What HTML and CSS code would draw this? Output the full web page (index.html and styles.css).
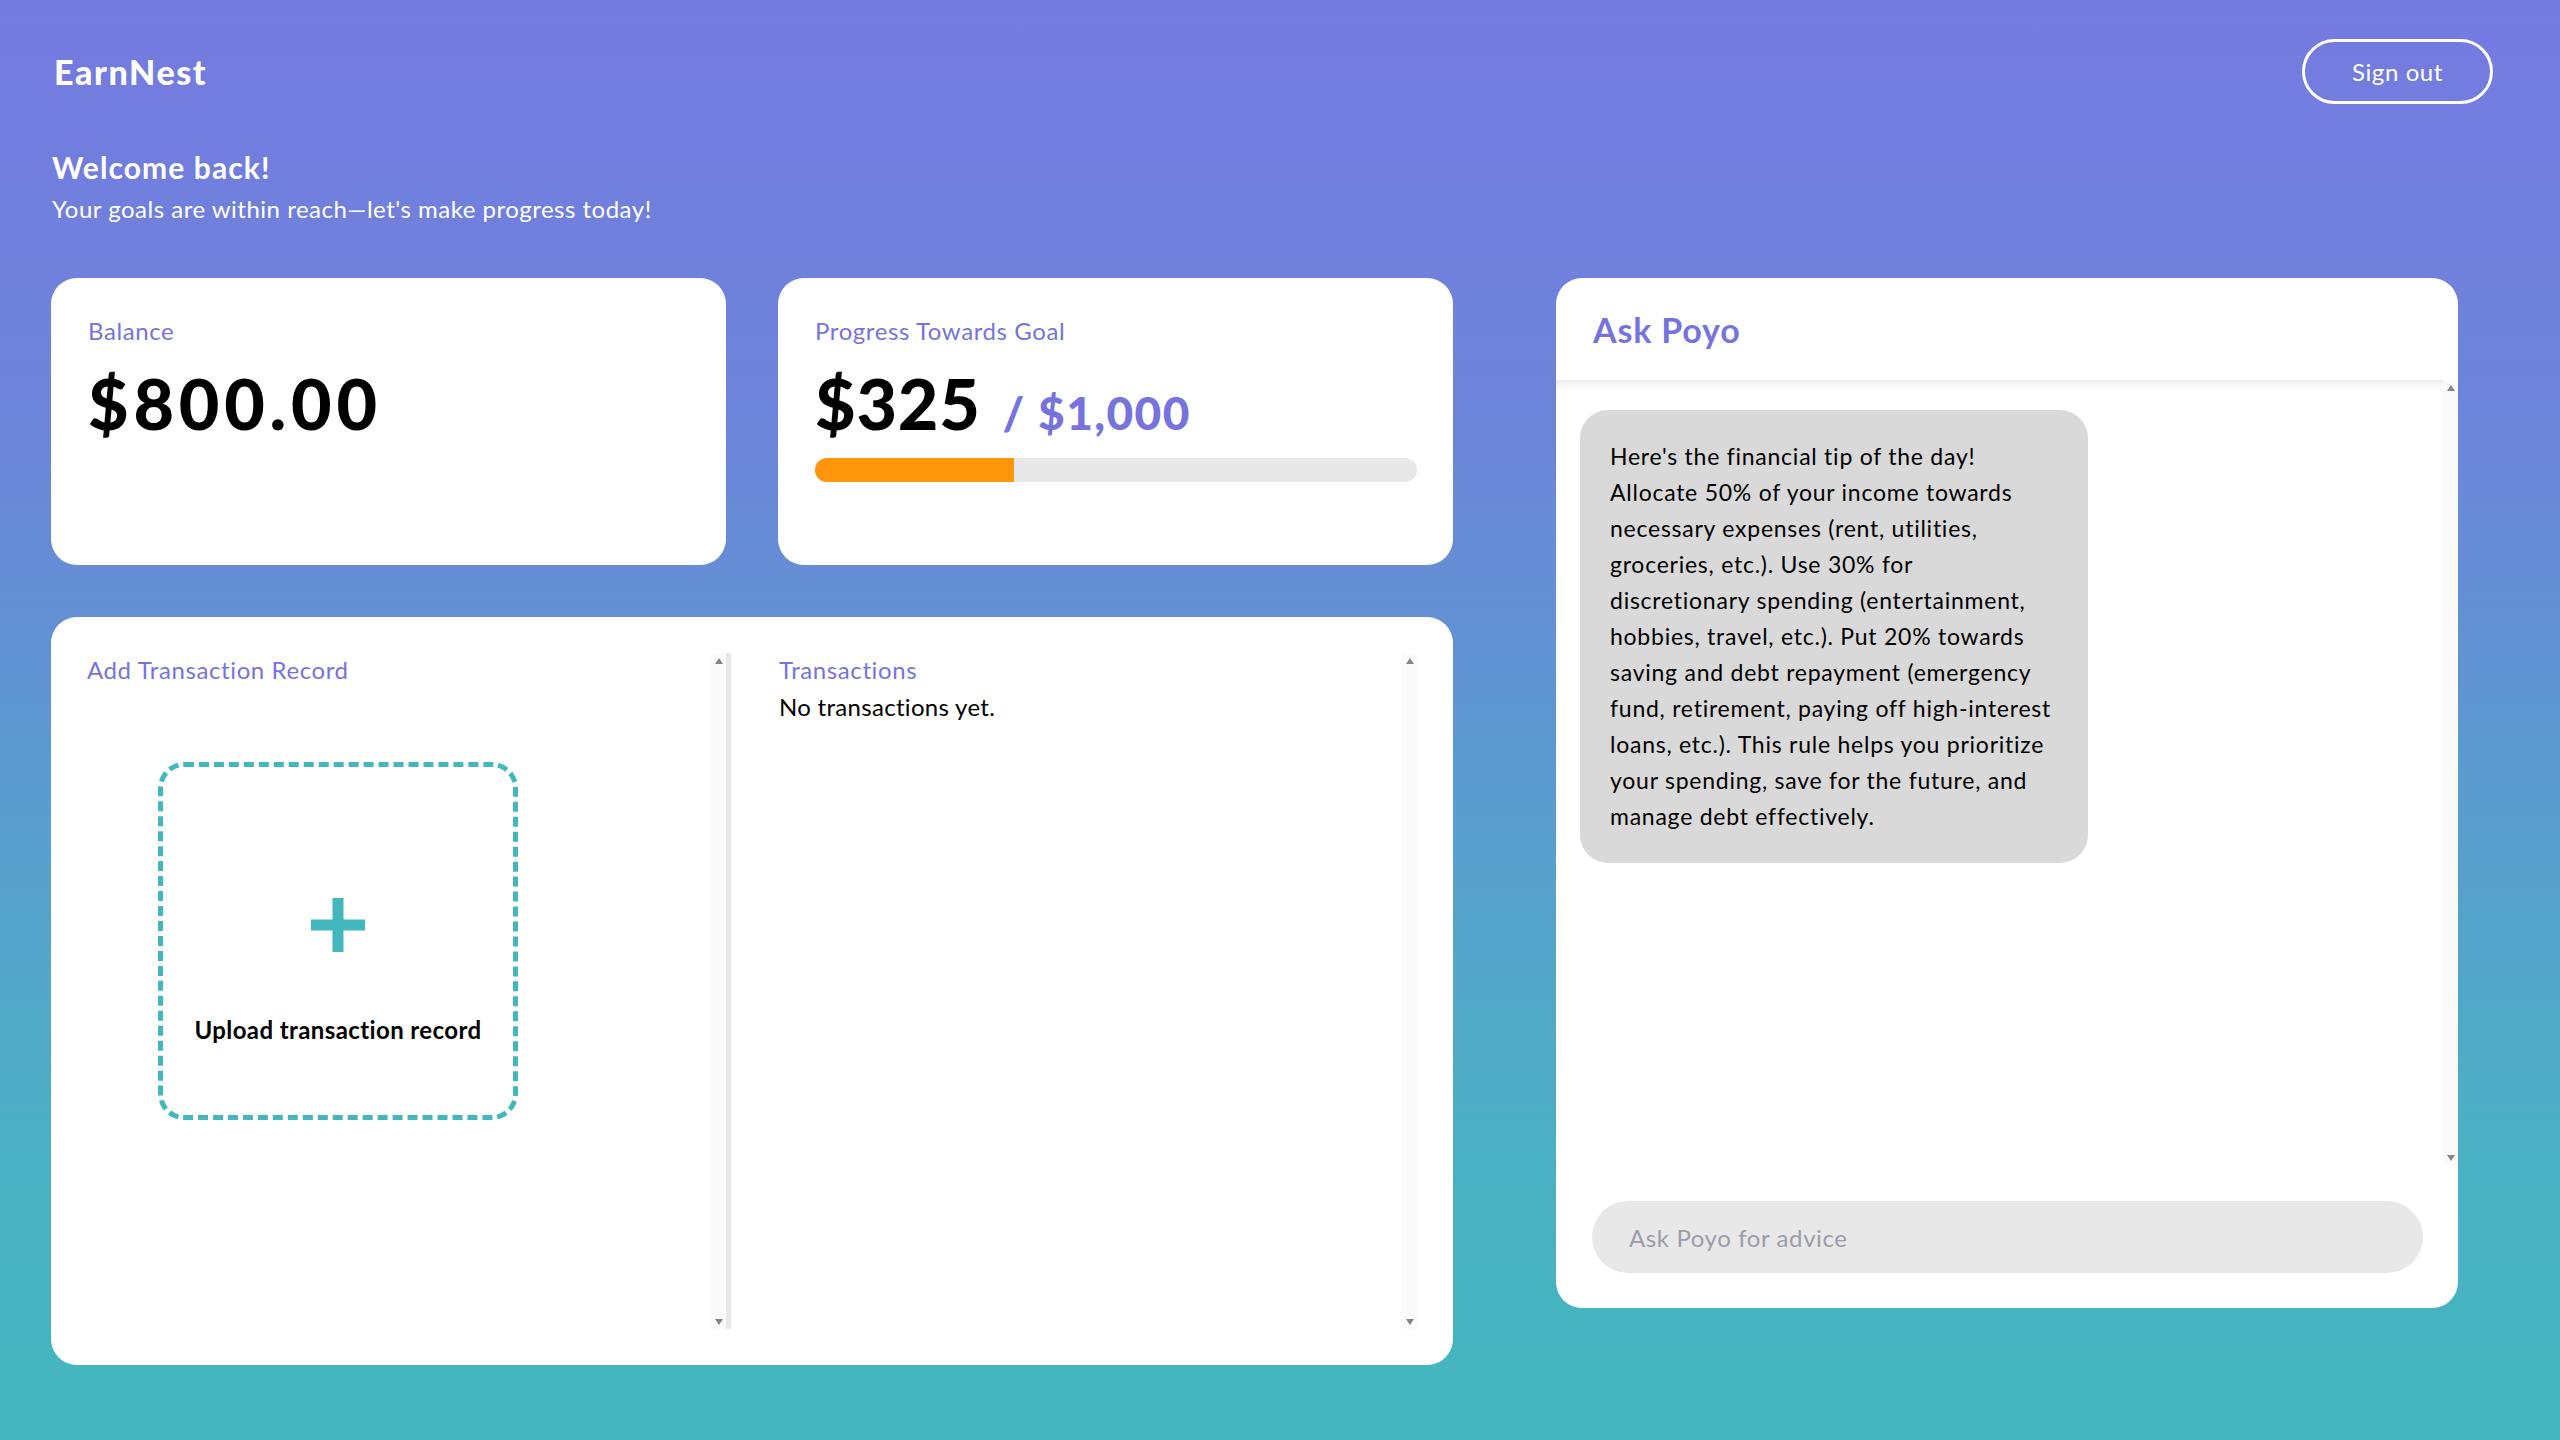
FILE: index.html
```html
<!DOCTYPE html>
<html lang="en">
<head>
<meta charset="utf-8">
<title>EarnNest</title>
<link rel="stylesheet" href="styles.css">
</head>
<body>
<header class="topbar">
  <div class="brand">EarnNest</div>
  <button class="signout">Sign out</button>
</header>
<section class="welcome">
  <h1 class="welcome-title">Welcome back!</h1>
  <p class="welcome-sub">Your goals are within reach—let's make progress today!</p>
</section>
<main class="dashboard">
  <div class="left">
    <div class="stats">
      <div class="card stat">
        <div class="label">Balance</div>
        <div class="amount">$800.00</div>
      </div>
      <div class="card stat">
        <div class="label">Progress Towards Goal</div>
        <div class="amount-row"><span class="amount">$325</span><span class="goal">/ $1,000</span></div>
        <div class="bar"><div class="bar-fill" style="width:33%"></div></div>
      </div>
    </div>
    <div class="card records">
      <div class="col col-add">
        <div class="col-body">
          <div class="label">Add Transaction Record</div>
          <div class="upload">
            <svg class="plus" width="54" height="54" viewBox="0 0 54 54"><rect x="0" y="21.5" width="54" height="11" fill="#42b8be"/><rect x="21.5" y="0" width="11" height="54" fill="#42b8be"/></svg>
            <div class="upload-text">Upload transaction record</div>
          </div>
        </div>
        <div class="rail"><span class="arrow-up"></span><span class="arrow-down"></span></div>
      </div>
      <div class="col col-list">
        <div class="col-body list-body">
          <div class="label">Transactions</div>
          <div class="empty">No transactions yet.</div>
        </div>
        <div class="rail"><span class="arrow-up"></span><span class="arrow-down"></span></div>
      </div>
    </div>
  </div>
  <aside class="card chat">
    <div class="chat-head">Ask Poyo</div>
    <div class="messages">
      <div class="messages-body">
        <div class="bubble">Here's the financial tip of the day!<br>Allocate 50% of your income towards<br>necessary expenses (rent, utilities,<br>groceries, etc.). Use 30% for<br>discretionary spending (entertainment,<br>hobbies, travel, etc.). Put 20% towards<br>saving and debt repayment (emergency<br>fund, retirement, paying off high-interest<br>loans, etc.). This rule helps you prioritize<br>your spending, save for the future, and<br>manage debt effectively.</div>
      </div>
      <div class="rail"><span class="arrow-up"></span><span class="arrow-down"></span></div>
    </div>
    <div class="ask">
      <input class="ask-input" type="text" placeholder="Ask Poyo for advice">
    </div>
  </aside>
</main>
</body>
</html>
```
FILE: styles.css
```css
* { box-sizing: border-box; }
html, body { margin: 0; padding: 0; }
body {
  width: 2560px;
  height: 1440px;
  overflow: hidden;
  font-family: "Lato", "Noto Sans", sans-serif;
  color: #000;
  background: linear-gradient(180deg, #757ae1 0%, #6c85d9 30%, #5a9ccf 55%, #4bb0c4 80%, #42b6bd 100%);
}
.topbar {
  display: flex;
  justify-content: space-between;
  align-items: center;
  padding: 39px 67px 0 54px;
  height: 104px;
}
.brand {
  color: #fff;
  font-size: 34px;
  font-weight: 900;
  letter-spacing: 1.6px;
}
.signout {
  width: 191px;
  height: 65px;
  border: 3px solid #fff;
  border-radius: 40px;
  background: transparent;
  color: #fff;
  font-family: inherit;
  font-size: 24px;
  font-weight: 400;
  letter-spacing: 0.6px;
  padding: 0;
  cursor: pointer;
}
.welcome {
  padding-left: 52px;
  margin-top: 45px;
  color: #fff;
}
.welcome-title {
  margin: 0;
  font-size: 30px;
  font-weight: 700;
  line-height: 36px;
  letter-spacing: 1.1px;
}
.welcome-sub {
  margin: 9px 0 0;
  font-size: 24px;
  font-weight: 400;
  line-height: 30px;
  letter-spacing: 0.5px;
}
.dashboard {
  display: flex;
  align-items: flex-start;
  padding-left: 51px;
  margin-top: 54px;
  gap: 103px;
}
.left {
  width: 1402px;
  display: flex;
  flex-direction: column;
  gap: 52px;
}
.stats {
  display: grid;
  grid-template-columns: 1fr 1fr;
  gap: 52px;
}
.card {
  background: #fff;
  border-radius: 26px;
}
.stat {
  height: 287px;
  padding: 39px 36px 0 37px;
}
.label {
  color: #7673df;
  font-size: 24px;
  line-height: 28px;
  letter-spacing: 0.6px;
}
.amount {
  font-size: 70px;
  font-weight: 900;
  line-height: 68px;
  letter-spacing: 4.8px;
}
.stat > .amount { margin-top: 24px; }
.amount-row {
  margin-top: 24px;
  display: flex;
  align-items: baseline;
  gap: 22px;
  height: 68px;
}
.amount-row .amount { letter-spacing: 0.8px; }
.goal {
  color: #7673df;
  font-size: 46px;
  font-weight: 900;
  line-height: 68px;
  letter-spacing: 1.4px;
}
.bar {
  margin-top: 21px;
  height: 24px;
  background: #e8e8e8;
  border-radius: 12px;
  overflow: hidden;
}
.bar-fill {
  height: 100%;
  background: #ff960a;
}
.records {
  height: 748px;
  padding: 36px;
  display: flex;
}
.col {
  height: 100%;
  display: flex;
}
.col-body {
  flex: 1;
  overflow: hidden;
}
.col-add {
  width: 644px;
  border-right: 5px solid #e8e8e8;
}
.col-list { flex: 1; }
.list-body { padding-left: 48px; }
.col .label { margin-top: 3px; }
.rail {
  width: 15px;
  flex: none;
  background: #fafafa;
  display: flex;
  flex-direction: column;
  justify-content: space-between;
  align-items: center;
  padding: 5px 0 4px;
}
.arrow-up {
  width: 0;
  height: 0;
  border-left: 4.5px solid transparent;
  border-right: 4.5px solid transparent;
  border-bottom: 6px solid #858585;
}
.arrow-down {
  width: 0;
  height: 0;
  border-left: 4.5px solid transparent;
  border-right: 4.5px solid transparent;
  border-top: 6px solid #858585;
}
.upload {
  width: 360px;
  height: 358px;
  margin: 78px 0 0 71px;
  border: 5px dashed #42b8be;
  border-radius: 26px;
  display: flex;
  flex-direction: column;
  align-items: center;
  padding-top: 131px;
}
.plus { display: block; flex: none; }
.upload-text {
  margin-top: 64px;
  font-size: 24px;
  line-height: 28px;
  font-weight: 700;
  letter-spacing: 0.4px;
  white-space: nowrap;
}
.empty {
  margin-top: 9px;
  font-size: 24px;
  line-height: 28px;
  letter-spacing: 0.3px;
}
.chat {
  width: 902px;
  height: 1030px;
  display: flex;
  flex-direction: column;
  overflow: hidden;
}
.chat-head {
  height: 102px;
  flex: none;
  display: flex;
  align-items: center;
  padding-left: 37px;
  color: #7673df;
  font-size: 34px;
  font-weight: 700;
  letter-spacing: 0.8px;
}
.messages {
  flex: 1;
  display: flex;
  min-height: 0;
}
.messages-body {
  flex: 1;
  padding: 30px 24px;
  box-shadow: inset 0 8px 8px -5px rgba(0, 0, 0, 0.1);
}
.bubble {
  width: 508px;
  background: #d9d9d9;
  border-radius: 28px;
  padding: 28px 30px 29px;
  font-size: 23px;
  line-height: 36px;
  letter-spacing: 0.75px;
  white-space: nowrap;
}
.ask {
  flex: none;
  padding: 36px 35px 35px 36px;
}
.ask-input {
  display: block;
  width: 100%;
  height: 72px;
  border: none;
  outline: none;
  border-radius: 36px;
  background: #e8e8e8;
  padding: 0 37px;
  font-family: inherit;
  font-size: 24px;
  letter-spacing: 0.6px;
  color: #333;
}
.ask-input::placeholder { color: #9c9ca8; }
```
